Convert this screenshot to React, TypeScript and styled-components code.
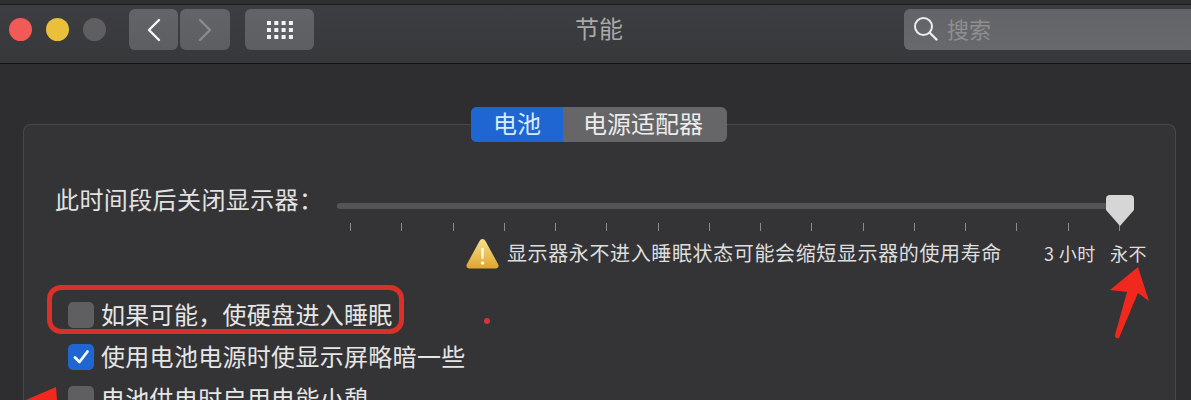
import React from "react";
import styled, { createGlobalStyle } from "styled-components";

const Global = createGlobalStyle`
  html, body { margin: 0; padding: 0; background: #2e2e30; }
  body { font-family: "Noto Sans CJK SC", "Liberation Sans", sans-serif; }
`;

const Page = styled.div`
  position: relative;
  width: 1191px;
  height: 400px;
  overflow: hidden;
  display: flex;
  flex-direction: column;
  background: #2e2e30;
  color: #e4e4e4;
`;

const TopStrip = styled.div`
  height: 4px;
  background: #303032;
  border-bottom: 1px solid #1c1c1d;
  flex: none;
`;

const Toolbar = styled.header`
  flex: none;
  height: 59px;
  box-sizing: border-box;
  border-bottom: 1px solid #131314;
  background: linear-gradient(#3d3e41, #37383a);
  display: flex;
  align-items: flex-start;
  padding: 4px 0 0 9px;
  position: relative;
`;

const Light = styled.span<{ $color: string; $mr: number }>`
  width: 23px;
  height: 23px;
  margin: 9px ${(p) => p.$mr}px 0 0;
  border-radius: 50%;
  background: ${(p) => p.$color};
  flex: none;
`;

const ToolButton = styled.div<{ $w: number; $mr: number }>`
  width: ${(p) => p.$w}px;
  height: 41px;
  margin-right: ${(p) => p.$mr}px;
  border-radius: 6px;
  background: linear-gradient(#636467, #5d5e61);
  display: flex;
  align-items: center;
  justify-content: center;
  flex: none;
`;

const Title = styled.div`
  position: absolute;
  left: 575px;
  top: 4px;
  font-size: 24px;
  line-height: 38px;
  color: #a9a9ab;
`;

const Search = styled.div`
  margin-left: auto;
  width: 287px;
  height: 41px;
  box-sizing: border-box;
  border-radius: 6px 0 0 6px;
  background: linear-gradient(#636467, #68696c);
  display: flex;
  align-items: center;
  padding: 0 0 2px 9px;
  gap: 9px;
  font-size: 22px;
  color: #8f8f91;
  flex: none;
`;

const SearchText = styled.span`
  margin-top: -2px;
`;

const Content = styled.main`
  flex: 1;
  padding: 60px 15px 0 23px;
  min-height: 0;
`;

const Panel = styled.section`
  height: 320px;
  box-sizing: border-box;
  border: 1px solid #48484a;
  border-bottom: none;
  border-radius: 8px 8px 0 0;
  background: #343436;
  display: flex;
  flex-direction: column;
  padding: 0 0 0 32px;
`;

const Tabs = styled.div`
  align-self: flex-start;
  margin: -18px 0 0 415px;
  width: 256px;
  height: 35px;
  display: flex;
  border-radius: 6px;
  background: #666668;
  font-size: 24px;
  flex: none;
`;

const Tab = styled.div<{ $active?: boolean; $w: number }>`
  width: ${(p) => p.$w}px;
  height: 35px;
  box-sizing: border-box;
  padding: 0 ${(p) => (p.$active ? 0 : 4)}px 3px 0;
  display: flex;
  align-items: center;
  justify-content: center;
  line-height: 32px;
  border-radius: 6px 0 0 6px;
  background: ${(p) => (p.$active ? "#1f66d3" : "transparent")};
  color: ${(p) => (p.$active ? "#d8ecff" : "#ececec")};
`;

const SliderRow = styled.div`
  display: flex;
  margin-top: 40px;
  height: 55px;
  flex: none;
`;

const SliderLabel = styled.div`
  width: 282px;
  flex: none;
  font-size: 24px;
  line-height: 32px;
  letter-spacing: 0.4px;
  margin: 1px 0 0 -1px;
  color: #e2e2e2;
  white-space: nowrap;
`;

const SliderArea = styled.div`
  width: 797px;
  flex: none;
  position: relative;
  padding-top: 21px;
`;

const Track = styled.div`
  height: 6px;
  margin-right: 14px;
  background: #545456;
  border-radius: 3px;
`;

const Ticks = styled.div`
  display: flex;
  justify-content: space-between;
  margin: 14px 14px 0 13px;
`;

const Tick = styled.span`
  width: 1px;
  height: 8px;
  background: #8a8a8c;
`;

const Thumb = styled.svg`
  position: absolute;
  left: 769px;
  top: 13px;
`;

const WarnRow = styled.div`
  display: flex;
  align-items: center;
  height: 34px;
  margin-top: -1px;
  padding-left: 410px;
  flex: none;
  white-space: nowrap;
`;

const WarnText = styled.span`
  margin-left: 8px;
  font-size: 20px;
  letter-spacing: 0.62px;
  line-height: 34px;
  color: #dedede;
  width: 537px;
  flex: none;
`;

const ScaleText = styled.span<{ $w: number }>`
  font-size: 18px;
  line-height: 34px;
  letter-spacing: 0.4px;
  color: #dedede;
  width: ${(p) => p.$w}px;
  flex: none;
`;

const Options = styled.div`
  margin-top: 24px;
  display: flex;
  flex-direction: column;
  padding-left: 12px;
`;

const Option = styled.label`
  position: relative;
  display: flex;
  align-items: center;
  height: 42px;
  gap: 7px;
  font-size: 24px;
  letter-spacing: 0.3px;
  color: #e6e6e6;
  white-space: nowrap;
  flex: none;
`;

const OptionText = styled.span`
  margin-top: -3px;
`;

const Check = styled.span<{ $on?: boolean }>`
  width: 26px;
  height: 26px;
  border-radius: 5px;
  flex: none;
  background: ${(p) => (p.$on ? "#1f66d3" : "#5f5f61")};
  display: flex;
  align-items: center;
  justify-content: center;
`;

const Highlight = styled.span`
  position: absolute;
  left: -21px;
  top: -9px;
  width: 357px;
  height: 49px;
  box-sizing: border-box;
  border: 5px solid #d9302a;
  border-radius: 14px;
`;

const Dot = styled.span`
  position: absolute;
  left: 484px;
  top: 318px;
  width: 6px;
  height: 6px;
  border-radius: 50%;
  background: #d8323a;
`;

const Annotation = styled.svg`
  position: absolute;
  left: 0;
  top: 0;
  pointer-events: none;
`;

const GridIcon = () => (
  <svg width="28" height="20" viewBox="0 0 28 20">
    {[0, 1, 2].map((r) =>
      [0, 1, 2, 3].map((c) => (
        <rect key={`${r}-${c}`} x={1 + c * 7.3} y={1 + r * 7} width="4" height="4" fill="#f4f4f4" />
      ))
    )}
  </svg>
);

const ticks = Array.from({ length: 16 }, (_, i) => i);

export default function App() {
  return (
    <Page>
      <Global />
      <TopStrip />
      <Toolbar>
        <Light $color="#f25a57" $mr={14} />
        <Light $color="#eac03a" $mr={14} />
        <Light $color="#5f5f61" $mr={23} />
        <ToolButton $w={49} $mr={2}>
          <svg width="16" height="24" viewBox="0 0 16 24" fill="none">
            <path d="M13 2 L3 12 L13 22" stroke="#f6f6f6" strokeWidth="2.4" strokeLinecap="round" strokeLinejoin="round" />
          </svg>
        </ToolButton>
        <ToolButton $w={50} $mr={15}>
          <svg width="16" height="24" viewBox="0 0 16 24" fill="none">
            <path d="M3 2 L13 12 L3 22" stroke="#8b8c8e" strokeWidth="2.4" strokeLinecap="round" strokeLinejoin="round" />
          </svg>
        </ToolButton>
        <ToolButton $w={69} $mr={0}>
          <GridIcon />
        </ToolButton>
        <Title>节能</Title>
        <Search>
          <svg width="25" height="25" viewBox="0 0 25 25" fill="none">
            <circle cx="10.5" cy="10.5" r="8.5" stroke="#ececec" strokeWidth="2" />
            <path d="M17 17 L23.5 23.5" stroke="#ececec" strokeWidth="2.4" strokeLinecap="round" />
          </svg>
          <SearchText>搜索</SearchText>
        </Search>
      </Toolbar>
      <Content>
        <Panel>
          <Tabs>
            <Tab $active $w={92}>电池</Tab>
            <Tab $w={164}>电源适配器</Tab>
          </Tabs>
          <SliderRow>
            <SliderLabel>此时间段后关闭显示器：</SliderLabel>
            <SliderArea>
              <Track />
              <Ticks>
                {ticks.map((t) => (
                  <Tick key={t} />
                ))}
              </Ticks>
              <Thumb width="28" height="32" viewBox="0 0 28 32">
                <path d="M4 0 H24 a4 4 0 0 1 4 4 V15 L14 31 L0 15 V4 a4 4 0 0 1 4 -4 Z" fill="#d6d6d6" />
              </Thumb>
            </SliderArea>
          </SliderRow>
          <WarnRow>
            <svg width="33" height="31" viewBox="0 0 33 31">
              <defs>
                <linearGradient id="warn" x1="0" y1="0" x2="0" y2="1">
                  <stop offset="0" stopColor="#f6e08e" />
                  <stop offset="1" stopColor="#e0a52c" />
                </linearGradient>
              </defs>
              <path d="M16.5 1 C18 1 19 2 20 4 L32 26 C33.4 28.6 32 30.5 29.5 30.5 H3.5 C1 30.5 -0.4 28.6 1 26 L13 4 C14 2 15 1 16.5 1 Z" fill="url(#warn)" />
              <path d="M15 10 H18 L17.4 21 H15.6 Z" fill="#fff8e0" />
              <circle cx="16.5" cy="25" r="1.8" fill="#fff8e0" />
            </svg>
            <WarnText>显示器永不进入睡眠状态可能会缩短显示器的使用寿命</WarnText>
            <ScaleText $w={66}>3 小时</ScaleText>
            <ScaleText $w={40}>永不</ScaleText>
          </WarnRow>
          <Options>
            <Option>
              <Check />
              <OptionText>如果可能，使硬盘进入睡眠</OptionText>
              <Highlight />
            </Option>
            <Option>
              <Check $on>
                <svg width="18" height="16" viewBox="0 0 18 16" fill="none">
                  <path d="M3 8.5 L7.5 13 L15.5 2.5" stroke="#f4f8ff" strokeWidth="2.8" strokeLinecap="round" strokeLinejoin="round" />
                </svg>
              </Check>
              <OptionText>使用电池电源时使显示屏略暗一些</OptionText>
            </Option>
            <Option>
              <Check />
              <OptionText>电池供电时启用电能小憩</OptionText>
            </Option>
          </Options>
        </Panel>
      </Content>
      <Dot />
      <Annotation width="1191" height="400" viewBox="0 0 1191 400">
        <path d="M1138 267 L1110 290 L1127 292 L1115 335 Q1115 339 1119 338 L1138 293 L1149 301 Z" fill="#f0281e" />
        <path d="M26 400 L56 387 L57 400 Z" fill="#f0281e" />
      </Annotation>
    </Page>
  );
}
